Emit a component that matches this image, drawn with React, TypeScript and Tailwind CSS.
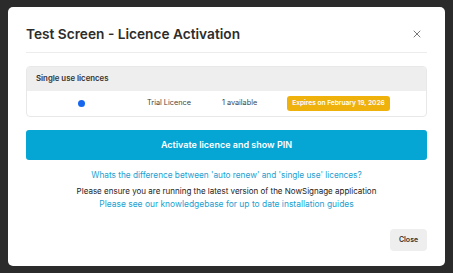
import { X } from "lucide-react";

const font = { fontFamily: "Inter, 'Noto Sans', sans-serif" };

export default function App() {
  return (
    <div className="h-[273px] w-[453px] overflow-hidden bg-[#2b2b2b] pt-[7px] pl-[8px]" style={font}>
      <div className="flex h-[259px] w-[437px] flex-col rounded-[5px] bg-white px-[18px]">
        <div className="flex h-[46px] items-center justify-between border-b border-[#ececec] pt-[9px]">
          <h1 className="text-[13.7px] font-semibold text-[#2d2d2d]">Test Screen - Licence Activation</h1>
          <X size={12} strokeWidth={1.6} className="mr-[4px] text-[#555]" />
        </div>

        <div className="mt-[13px] overflow-hidden rounded-[4px] border border-[#e8e8e8]">
          <div className="flex h-[24px] items-center bg-[#eeeeee] px-[9px] text-[7.8px] font-semibold text-[#333]">
            Single use licences
          </div>
          <div className="flex h-[25px] items-center text-[7.3px] text-[#444]">
            <span className="ml-[51px] h-[7px] w-[7px] rounded-full bg-[#1767ee]" />
            <span className="ml-[62px]">Trial Licence</span>
            <span className="ml-[31px]">1 available</span>
            <span className="ml-[30px] rounded-[3px] bg-[#efb10b] px-[5px] py-[3px] text-[6.6px] font-semibold text-white">
              Expires on February 19, 2026
            </span>
          </div>
        </div>

        <button className="mt-[13px] h-[30px] w-full rounded-[3px] bg-[#05a5d4] text-[9px] font-semibold text-white">
          Activate licence and show PIN
        </button>

        <p className="mt-[8px] text-center text-[8.25px] leading-[14px] text-[#1a9fd2]">
          Whats the difference between 'auto renew' and 'single use' licences?
        </p>
        <p className="mt-[3px] text-center text-[8px] leading-[13px] text-[#222]">
          Please ensure you are running the latest version of the NowSignage application
          <br />
          <span className="text-[8.45px] text-[#1a9fd2]">Please see our knowledgebase for up to date installation guides</span>
        </p>

        <div className="mt-[18px] flex justify-end">
          <button className="h-[22px] w-[37px] rounded-[4px] bg-[#eeeeee] text-[7px] font-semibold text-[#333]">
            Close
          </button>
        </div>
      </div>
    </div>
  );
}
